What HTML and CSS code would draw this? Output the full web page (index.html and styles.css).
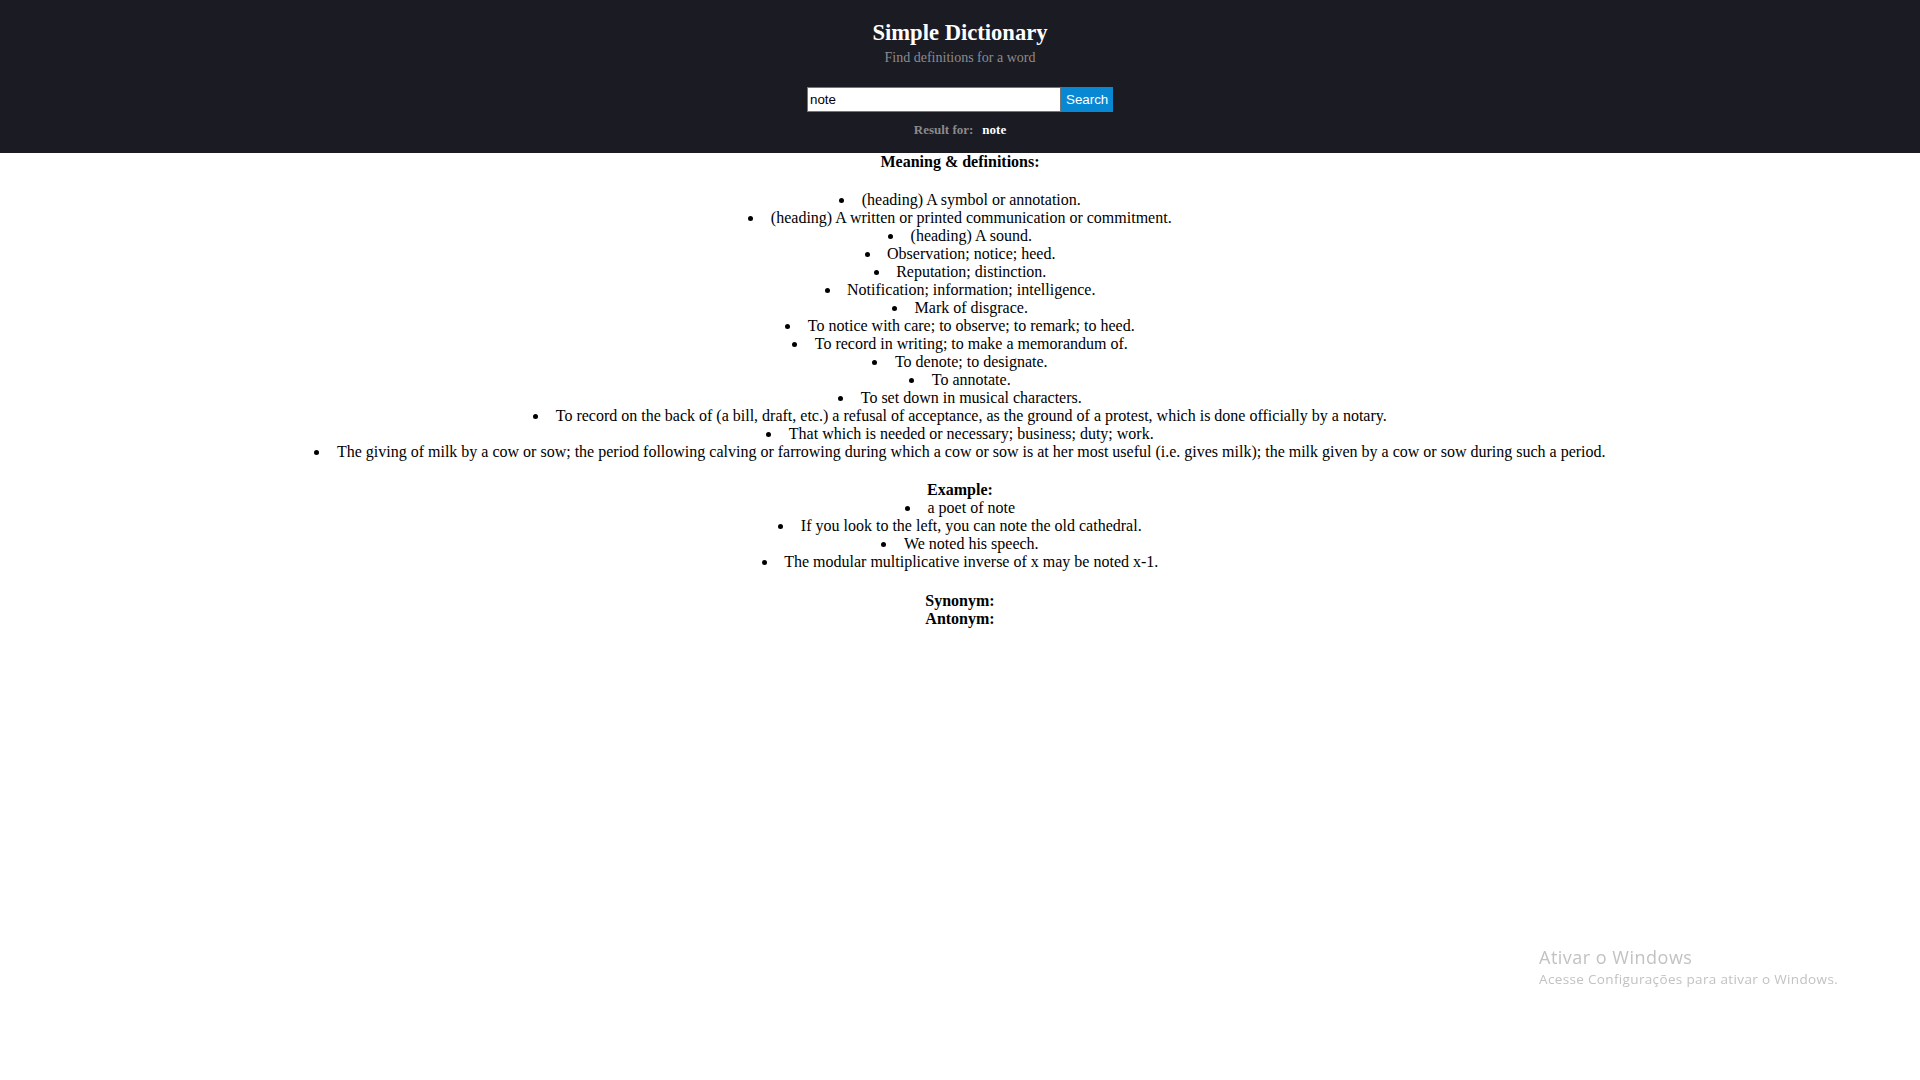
FILE: index.html
```html
<!DOCTYPE html>
<html lang="en">
<head>
<meta charset="utf-8">
<title>Simple Dictionary</title>
<link rel="stylesheet" href="styles.css">
</head>
<body>
<header class="top">
  <h1 class="title">Simple Dictionary</h1>
  <p class="subtitle">Find definitions for a word</p>
  <form class="search">
    <input class="search-input" type="text" value="note">
    <button class="search-btn" type="button">Search</button>
  </form>
  <p class="result"><span class="result-label">Result for:</span><span class="result-word">note</span></p>
</header>
<main class="content">
  <h2 class="section-title">Meaning &amp; definitions:</h2>
  <ul class="items gap-first">
    <li>(heading) A symbol or annotation.</li>
    <li>(heading) A written or printed communication or commitment.</li>
    <li>(heading) A sound.</li>
    <li>Observation; notice; heed.</li>
    <li>Reputation; distinction.</li>
    <li>Notification; information; intelligence.</li>
    <li>Mark of disgrace.</li>
    <li>To notice with care; to observe; to remark; to heed.</li>
    <li>To record in writing; to make a memorandum of.</li>
    <li>To denote; to designate.</li>
    <li>To annotate.</li>
    <li>To set down in musical characters.</li>
    <li>To record on the back of (a bill, draft, etc.) a refusal of acceptance, as the ground of a protest, which is done officially by a notary.</li>
    <li>That which is needed or necessary; business; duty; work.</li>
    <li>The giving of milk by a cow or sow; the period following calving or farrowing during which a cow or sow is at her most useful (i.e. gives milk); the milk given by a cow or sow during such a period.</li>
  </ul>
  <h2 class="section-title gap-example">Example:</h2>
  <ul class="items">
    <li>a poet of note</li>
    <li>If you look to the left, you can note the old cathedral.</li>
    <li>We noted his speech.</li>
    <li>The modular multiplicative inverse of x may be noted x-1.</li>
  </ul>
  <h2 class="section-title gap-synonym">Synonym:</h2>
  <h2 class="section-title">Antonym:</h2>
</main>
<div class="watermark">
  <div class="wm-title">Ativar o Windows</div>
  <div class="wm-sub">Acesse Configurações para ativar o Windows.</div>
</div>
</body>
</html>
```

FILE: styles.css
```css
html, body {
  margin: 0;
  padding: 0;
  background: #ffffff;
}

body {
  font-family: "Liberation Serif", "Times New Roman", serif;
  font-size: 16px;
  line-height: 18px;
  color: #000000;
  min-height: 1080px;
}

.top {
  background: #1b1b24;
  display: flex;
  flex-direction: column;
  align-items: center;
  padding: 20px 0 16px;
}

.title {
  margin: 0;
  font-size: 22.6px;
  line-height: 26px;
  font-weight: bold;
  color: #ffffff;
}

.subtitle {
  margin: 4px 0 0;
  font-size: 14px;
  line-height: 16px;
  color: #8c8c8c;
}

.search {
  margin: 21px 0 0;
  display: flex;
}

.search-input {
  box-sizing: border-box;
  width: 254px;
  height: 25px;
  margin: 0;
  padding: 1px 2px;
  border: 1px solid #767676;
  border-radius: 0;
  background: #ffffff;
  color: #000000;
  font-family: "Liberation Sans", Arial, sans-serif;
  font-size: 13.33px;
  outline: none;
}

.search-btn {
  box-sizing: border-box;
  width: 52px;
  height: 25px;
  margin: 0;
  padding: 0 5px;
  border: none;
  border-radius: 0;
  background: #0888d3;
  color: #ffffff;
  font-family: "Liberation Sans", Arial, sans-serif;
  font-size: 13.33px;
}

.result {
  margin: 10px 0 0;
  display: flex;
  gap: 9px;
  font-size: 13px;
  line-height: 15px;
  font-weight: bold;
}

.result-label {
  color: #8a8a8a;
}

.result-word {
  color: #ffffff;
}

.content {
  text-align: center;
}

.section-title {
  margin: 0;
  font-size: 16px;
  line-height: 18px;
  font-weight: bold;
}

.items {
  list-style: none;
  padding: 0;
  margin: 0;
}

.gap-first {
  margin-top: 19.5px;
}

.gap-example {
  margin-top: 20.5px;
}

.gap-synonym {
  margin-top: 21px;
}

.items li {
  line-height: 18px;
}

.items li::before {
  content: "";
  display: inline-block;
  width: 5px;
  height: 5px;
  border-radius: 50%;
  background: #000000;
  margin-right: 17.5px;
  vertical-align: 2px;
}

.watermark {
  position: fixed;
  left: 1539px;
  top: 946px;
  font-family: "Open Sans", "Noto Sans", sans-serif;
  color: #c2c2c2;
  pointer-events: none;
}

.wm-title {
  font-size: 18px;
  line-height: 22px;
  letter-spacing: 0.5px;
}

.wm-sub {
  margin-top: 2px;
  font-size: 13.5px;
  line-height: 18px;
  letter-spacing: 0.35px;
}
```
